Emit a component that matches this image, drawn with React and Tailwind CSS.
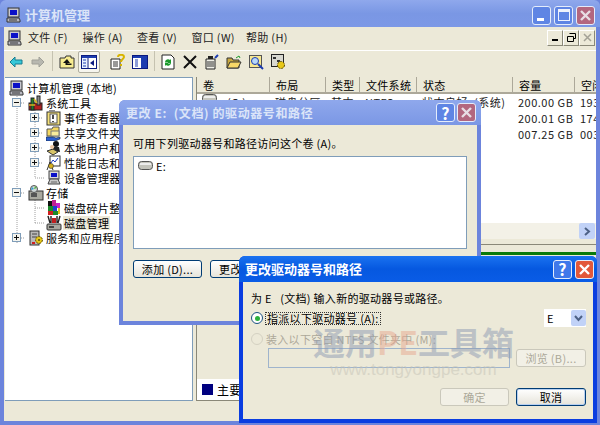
import React from "react";

const beige = "bg-[#ece9d8]";

const Computer = () => (
  <svg width="16" height="16" viewBox="0 0 16 16">
    <rect x="2" y="1" width="11" height="9" fill="#c8c8d0" stroke="#333" />
    <rect x="4" y="3" width="7" height="5" fill="#0a10c8" />
    <path d="M1 11h12l1 2v2H1z" fill="#b8b8c0" stroke="#333" />
    <path d="M3 13h8" stroke="#333" />
  </svg>
);

const Tools = () => (
  <svg width="16" height="16" viewBox="0 0 16 16">
    <rect x="1" y="8" width="13" height="7" fill="#b02020" stroke="#222" />
    <rect x="3" y="3" width="3" height="12" fill="#1d7a2d" stroke="#222" />
    <rect x="9" y="1" width="3" height="9" fill="#888" stroke="#222" />
    <path d="M6 4l3 4M1 10h6" stroke="#d8b020" strokeWidth="1.5" />
  </svg>
);

const EventIcon = () => (
  <svg width="16" height="16" viewBox="0 0 16 16">
    <rect x="1" y="2" width="13" height="13" fill="#f6e27a" stroke="#333" />
    <rect x="4" y="4" width="7" height="9" fill="#fff" stroke="#555" />
    <path d="M7 5v4M7 11v1" stroke="#111" strokeWidth="1.5" />
    <rect x="3" y="0" width="6" height="2" fill="#8a8a8a" />
  </svg>
);

const ShareIcon = () => (
  <svg width="16" height="16" viewBox="0 0 16 16">
    <path d="M1 4h5l1-2h6v9H1z" fill="#f4d860" stroke="#555" />
    <rect x="5" y="6" width="8" height="5" fill="#f8ec9c" stroke="#777" />
    <path d="M0 12h7l3 1 4-1v2l-5 2H0z" fill="#2c5fd0" stroke="#123" strokeWidth=".6" />
  </svg>
);

const UsersIcon = () => (
  <svg width="16" height="16" viewBox="0 0 16 16">
    <circle cx="10" cy="4" r="3" fill="#111" />
    <path d="M5 11l3-4h5l1 5z" fill="#222" />
    <path d="M1 11l6-2 5 3-5 3z" fill="#d8c468" stroke="#333" />
    <circle cx="6" cy="7" r="2" fill="#f0c8a0" />
  </svg>
);

const PerfIcon = () => (
  <svg width="16" height="16" viewBox="0 0 16 16">
    <rect x="4" y="1" width="10" height="10" fill="#fff" stroke="#333" />
    <path d="M5 8l2-3 2 2 3-4" stroke="#1c3cc0" fill="none" />
    <path d="M1 15l3-8 3 8M2 11h4" stroke="#333" fill="none" />
    <circle cx="5" cy="11" r="2.5" fill="#d8b020" stroke="#333" strokeWidth=".6" />
  </svg>
);

const DeviceIcon = () => (
  <svg width="16" height="16" viewBox="0 0 16 16">
    <rect x="3" y="1" width="10" height="8" fill="#d8d8d8" stroke="#444" />
    <rect x="5" y="3" width="6" height="4" fill="#0a10c8" />
    <path d="M2 14l2-5h8l2 5z" fill="#c8c8c8" stroke="#444" />
    <path d="M5 12h6" stroke="#666" />
  </svg>
);

const StorageIcon = () => (
  <svg width="16" height="16" viewBox="0 0 16 16">
    <rect x="1" y="6" width="14" height="9" fill="#a9a9a0" stroke="#333" />
    <rect x="3" y="8" width="6" height="4" fill="#555" />
    <circle cx="6" cy="4" r="3.5" fill="#d0d8d8" stroke="#555" />
    <path d="M4 2l2 2-3 1z" fill="#2c9cd0" />
    <path d="M7 1l2 2-3 1z" fill="#58b048" />
  </svg>
);

const DefragIcon = () => (
  <svg width="16" height="16" viewBox="0 0 16 16">
    <rect x="2" y="1" width="4" height="5" fill="#111" />
    <rect x="6" y="0" width="4" height="6" fill="#c02090" />
    <rect x="10" y="3" width="4" height="5" fill="#c820c8" />
    <rect x="2" y="6" width="5" height="5" fill="#1c8a2a" />
    <rect x="7" y="6" width="4" height="5" fill="#2040d0" />
    <rect x="2" y="11" width="5" height="4" fill="#d02020" />
    <rect x="7" y="11" width="5" height="4" fill="#1c8a2a" />
    <rect x="12" y="8" width="2" height="6" fill="#e0c020" />
  </svg>
);

const DiskIcon = () => (
  <svg width="16" height="16" viewBox="0 0 16 16">
    <rect x="1" y="9" width="14" height="6" rx="1" fill="#a8a8a0" stroke="#333" />
    <rect x="3" y="11" width="5" height="2" fill="#444" />
    <path d="M2 1l2 7M5 1v7M11 1v7M14 1l-2 7" stroke="#222" strokeWidth="1.4" />
    <path d="M6 3h4v5H6z" fill="#c02020" />
  </svg>
);

const ServiceIcon = () => (
  <svg width="16" height="16" viewBox="0 0 16 16">
    <rect x="2" y="1" width="9" height="14" fill="#b8b8b8" stroke="#333" />
    <path d="M4 4h5M4 7h5" stroke="#444" />
    <rect x="4" y="12" width="3" height="2" fill="#d02020" />
    <circle cx="11" cy="10" r="3.4" fill="#e8c818" stroke="#5a4a00" strokeDasharray="2 1" />
    <circle cx="11" cy="10" r="1" fill="#5a4a00" />
  </svg>
);

const ArrowLeft = () => (
  <svg width="14" height="12" viewBox="0 0 14 12">
    <path d="M1 6l5-5v3h7v4H6v3z" fill="#36c8d8" stroke="#167c90" />
  </svg>
);

const ArrowRight = () => (
  <svg width="14" height="12" viewBox="0 0 14 12">
    <path d="M13 6L8 1v3H1v4h7v3z" fill="#b8b8b0" stroke="#a0a098" />
  </svg>
);

const UpFolder = () => (
  <svg width="16" height="14" viewBox="0 0 16 14">
    <path d="M1 3h5l1-2h5v2h3v10H1z" fill="#f8ec90" stroke="#333" />
    <path d="M8 4l-4 4h2.500v2h6V8.500H8.500V8H11z" fill="#111" />
  </svg>
);

const PaneIcon = ({ flip }) => (
  <svg width="16" height="14" viewBox="0 0 16 14">
    <rect x=".5" y=".5" width="15" height="13" fill="#fff" stroke="#0a1a80" />
    <rect x="1" y="1" width="14" height="2" fill="#1c3cb0" />
    {flip ? (
      <>
        <rect x="9" y="3" width="6" height="10" fill="#1c3cb0" />
        <path d="M3 5h3M3 7h3M3 9h3M3 11h3" stroke="#1c3cb0" />
      </>
    ) : (
      <>
        <rect x="1" y="3" width="5" height="10" fill="#e8f0ff" />
        <path d="M7 3v10" stroke="#0a1a80" />
        <path d="M2 5h3M2 8h3M2 11h3" stroke="#1c3cb0" />
        <path d="M13 5v6l-4-3z" fill="#0a1a80" />
      </>
    )}
  </svg>
);

const HelpDoc = () => (
  <svg width="16" height="16" viewBox="0 0 16 16">
    <path d="M1 5h9v10H1z" fill="#fff" stroke="#222" />
    <path d="M3 8h5M3 10h5M3 12h5" stroke="#333" />
    <path d="M8 3c0-3 6-3 6 0 0 2-3 2-3 5M11 10v2" fill="none" stroke="#d8b400" strokeWidth="2" />
  </svg>
);

const Refresh = () => (
  <svg width="14" height="16" viewBox="0 0 14 16">
    <path d="M1 1h9l3 3v11H1z" fill="#fff" stroke="#222" />
    <path d="M4 8a3 3 0 015-2l1-1v4H6l1-1a2 2 0 00-2 1z" fill="#1c9a2c" />
    <path d="M10 9a3 3 0 01-5 2l-1 1V9h4l-1 1a2 2 0 002-1z" fill="#1c9a2c" />
  </svg>
);

const Cross = () => (
  <svg width="14" height="14" viewBox="0 0 14 14">
    <path d="M1 1l12 12M13 1L1 13" stroke="#111" strokeWidth="2" />
  </svg>
);

const Props = () => (
  <svg width="16" height="16" viewBox="0 0 16 16">
    <path d="M2 5h9v10H2z" fill="#f0f0e8" stroke="#222" />
    <path d="M3 8h7M3 10h7M3 12h7" stroke="#333" />
    <rect x="4" y="2" width="5" height="3" fill="#222" />
    <path d="M11 4l3-3" stroke="#1c3cb0" strokeWidth="2" />
  </svg>
);

const OpenFolder = () => (
  <svg width="16" height="14" viewBox="0 0 16 14">
    <path d="M1 3h5l1 2h6v8H1z" fill="#c8a840" stroke="#333" />
    <path d="M1 13l3-6h11l-3 6z" fill="#f8d868" stroke="#333" />
    <path d="M10 3l3-2 1 2" fill="none" stroke="#1c9a2c" />
  </svg>
);

const FindIcon = () => (
  <svg width="15" height="15" viewBox="0 0 15 15">
    <rect x=".5" y=".5" width="12" height="12" fill="#f8e890" stroke="#555" />
    <circle cx="6" cy="6" r="3.500" fill="#b8d8f8" stroke="#1c3cb0" />
    <path d="M9 9l5 5" stroke="#1c3cb0" strokeWidth="2" />
  </svg>
);

const GearDoc = () => (
  <svg width="15" height="16" viewBox="0 0 15 16">
    <rect x=".5" y=".5" width="12" height="12" fill="#d8d8d0" stroke="#222" />
    <path d="M2 3h3v2H2zM6 6h3v2H6z" fill="#333" />
    <circle cx="10" cy="11" r="3.500" fill="#e8c818" stroke="#5a4a00" strokeDasharray="2 1" />
  </svg>
);

const DriveIcon = () => (
  <svg width="15" height="9" viewBox="0 0 15 9">
    <rect x=".5" y=".5" width="14" height="8" rx="3" fill="#c4c4bc" stroke="#555" />
    <rect x="2" y="2" width="11" height="2" fill="#ededed" />
  </svg>
);

const Expander = ({ open }) => (
  <span className="flex h-[9px] w-[9px] items-center justify-center border border-[#7f9db9] bg-[#f4f4ee]">
    <svg width="7" height="7" viewBox="0 0 7 7">
      <path d={open ? "M1 3.500h5" : "M1 3.500h5M3.500 1v5"} stroke="#111" />
    </svg>
  </span>
);

const TreeRow = ({ level, expander, icon, label, selected }) => (
  <div className="relative flex h-[15px] items-center">
    <span className={level === 0 ? "w-[3px]" : level === 1 ? "w-[7px]" : "w-[25px]"} />
    {level > 0 && (
      <span className="flex w-[15px] shrink-0 items-center">
        {expander && <Expander open={expander === "open"} />}
      </span>
    )}
    <span className="flex w-[18px] shrink-0 items-center justify-center">{icon}</span>
    <span className={`whitespace-nowrap px-px leading-[14px] ${selected ? beige : ""}`}>{label}</span>
  </div>
);

const treeRows = [
  { level: 0, icon: <Computer />, label: "计算机管理 (本地)" },
  { level: 1, expander: "open", icon: <Tools />, label: "系统工具" },
  { level: 2, expander: "closed", icon: <EventIcon />, label: "事件查看器" },
  { level: 2, expander: "closed", icon: <ShareIcon />, label: "共享文件夹" },
  { level: 2, expander: "closed", icon: <UsersIcon />, label: "本地用户和组" },
  { level: 2, expander: "closed", icon: <PerfIcon />, label: "性能日志和警报" },
  { level: 2, icon: <DeviceIcon />, label: "设备管理器" },
  { level: 1, expander: "open", icon: <StorageIcon />, label: "存储" },
  { level: 2, icon: <DefragIcon />, label: "磁盘碎片整理" },
  { level: 2, icon: <DiskIcon />, label: "磁盘管理", selected: true },
  { level: 1, expander: "closed", icon: <ServiceIcon />, label: "服务和应用程序" },
];

const columns = ["卷", "布局", "类型", "文件系统", "状态", "容量", "空闲"];
const rows = [
  ["(C:)", "磁盘分区", "基本", "NTFS", "状态良好  (系统)", "200.00 GB", "193"],
  ["(D:)", "磁盘分区", "基本", "NTFS", "状态良好", "200.01 GB", "174"],
  ["(E:)", "磁盘分区", "基本", "NTFS", "状态良好", "007.25 GB", "003"],
];
const gridCols = "grid grid-cols-[73px_56px_34px_57px_96px_62px_22px]";

const menus = ["文件 (F)", "操作 (A)", "查看 (V)", "窗口 (W)", "帮助 (H)"];

const ToolBtn = ({ children, pressed }) => (
  <span
    className={`flex h-[22px] w-[22px] shrink-0 items-center justify-center rounded-[2px] ${
      pressed ? "border border-[#b0aea0] bg-[#f6f5ee]" : ""
    }`}
  >
    {children}
  </span>
);

const ToolSep = () => (
  <span className="flex w-[6px] shrink-0 justify-center">
    <span className="h-[20px] w-px bg-[#c5c2b0]" />
  </span>
);

const MdiBtn = ({ children, disabled }) => (
  <span className="flex h-[16px] w-[16px] items-center justify-center border border-[#fff] border-r-[#8a8878] border-b-[#8a8878] bg-[#ece9d8]">
    <svg width="11" height="11" viewBox="0 0 11 11" className={disabled ? "opacity-30" : ""}>
      {children}
    </svg>
  </span>
);

const CaptionBtn = ({ kind, active }) => {
  const color =
    kind === "close"
      ? active
        ? "bg-[#e2583a]"
        : "bg-[#b3677f]"
      : active
        ? "bg-[#3f78ea]"
        : "bg-[#5f85e4]";
  return (
    <span
      className={`flex h-[19px] w-[19px] items-center justify-center rounded-[3px] border border-[#e4ecfb] ${color}`}
    >
      {kind === "close" && (
        <svg width="13" height="13" viewBox="0 0 13 13">
          <path d="M2 2l9 9M11 2l-9 9" stroke={active ? "#fff" : "#e8dde4"} strokeWidth="2.400" />
        </svg>
      )}
      {kind === "help" && <span className="text-[16px] leading-none font-bold text-white">?</span>}
      {kind === "min" && <span className="mt-[8px] mr-[3px] h-[3px] w-[7px] bg-white" />}
      {kind === "max" && <span className="h-[12px] w-[12px] border border-t-[3px] border-[#eef2fc]" />}
    </span>
  );
};

const XpButton = ({ label, disabled, isDefault, className = "" }) => (
  <button
    className={`flex h-[18px] items-center justify-center rounded-[3px] border leading-none ${className} ${
      disabled
        ? "border-[#cac8bb] bg-[#f2f0e6] text-[#aca899]"
        : `border-[#003c74] bg-linear-to-b from-white to-[#e6e4da] text-black ${
            isDefault ? "shadow-[inset_0_0_0_1px_#b8d0f0]" : ""
          }`
    }`}
  >
    {label}
  </button>
);

const Radio = ({ checked, disabled }) => (
  <span
    className={`flex h-[12px] w-[12px] shrink-0 items-center justify-center rounded-full border ${
      disabled ? "border-[#d4d1c2] bg-[#ece9d8]" : "border-[#1c5180] bg-white"
    }`}
  >
    {checked && <span className="h-[5px] w-[5px] rounded-full bg-[#2bb03c]" />}
  </span>
);

const App = () => {
  return (
    <div className="relative h-[425px] w-[600px] overflow-hidden font-['Noto_Sans_CJK_SC','Liberation_Sans',sans-serif] text-[11px] tracking-[0.3px] text-black">
      {/* main window */}
      <div className="flex h-full w-full flex-col bg-[#6c84dc] px-[4px] pb-[4px]">
        <div className="-mx-[4px] flex h-[27px] shrink-0 items-center rounded-t-[6px] bg-linear-to-b from-[#8fa8ec] via-[#7a97e4] to-[#7c98e6] pt-[3px] pr-[5px] pl-[6px]">
          <Computer />
          <span className="ml-[3px] text-[13px] font-bold tracking-normal text-[#dbe4f8]">计算机管理</span>
          <span className="ml-auto flex gap-[3px]">
            <CaptionBtn kind="min" />
            <CaptionBtn kind="max" />
            <CaptionBtn kind="close" />
          </span>
        </div>
        <div className={`flex min-h-0 flex-1 flex-col ${beige}`}>
          <div className="flex h-[24px] shrink-0 items-center border-b border-white pb-[2px] pl-[3px]">
            <Computer />
            <div className="ml-[5px] flex">
              {menus.map((m) => (
                <span key={m} className="w-[54.500px] whitespace-nowrap text-[#222]">
                  {m}
                </span>
              ))}
            </div>
            <span className="mr-[1px] ml-auto flex">
              <MdiBtn>
                <path d="M2 8h6" stroke="#000" strokeWidth="2" />
              </MdiBtn>
              <MdiBtn>
                <path d="M3.500 1.500h6v5h-2M1.500 4.500h6v5h-6z" fill="none" stroke="#000" />
              </MdiBtn>
              <MdiBtn disabled>
                <path d="M2 2l7 7M9 2l-7 7" stroke="#000" strokeWidth="1.500" />
              </MdiBtn>
            </span>
          </div>
          <div className="flex h-[26px] shrink-0 items-start pl-[1px]">
            <ToolBtn><ArrowLeft /></ToolBtn>
            <ToolBtn><ArrowRight /></ToolBtn>
            <ToolSep />
            <span className="w-px" />
            <ToolBtn><UpFolder /></ToolBtn>
            <ToolBtn pressed><PaneIcon /></ToolBtn>
            <span className="w-[7px]" />
            <ToolBtn><HelpDoc /></ToolBtn>
            <ToolBtn><PaneIcon flip /></ToolBtn>
            <ToolSep />
            <ToolBtn><Refresh /></ToolBtn>
            <ToolBtn><Cross /></ToolBtn>
            <ToolBtn><Props /></ToolBtn>
            <ToolBtn><OpenFolder /></ToolBtn>
            <ToolBtn><FindIcon /></ToolBtn>
            <ToolBtn><GearDoc /></ToolBtn>
          </div>

          <div className="flex h-[324px] shrink-0 gap-[3px] pl-px">
            {/* tree */}
            <div className="relative h-full w-[188px] shrink-0 border border-l-0 border-[#7f9db9] bg-white pt-[2px]">
              <svg width="60" height="170" className="absolute top-0 left-0">
                <path
                  d="M12 16v150M12 25h8M30 30v70M30 40h8M30 55h8M30 70h8M30 85h8M30 100h10M12 115h8M30 120v25M30 130h10M30 145h10M12 160h8"
                  stroke="#a0a0a0"
                  strokeDasharray="1 1"
                  fill="none"
                />
              </svg>
              {treeRows.map((r) => (
                <TreeRow key={r.label} {...r} />
              ))}
            </div>

            {/* volumes and disks */}
            <div className="flex h-full min-w-0 flex-1 flex-col border-l border-[#8a8878]">
              <div className="flex h-[162px] shrink-0 flex-col overflow-hidden bg-white">
                <div className={`${gridCols} h-[17px] shrink-0 ${beige}`}>
                  {columns.map((c) => (
                    <span
                      key={c}
                      className="overflow-hidden border-r border-b-2 border-[#aca899] pl-[6px] leading-[16px] whitespace-nowrap"
                    >
                      {c}
                    </span>
                  ))}
                </div>
                <div className="flex-1">
                  {rows.map((row) => (
                    <div key={row[5]} className={`${gridCols} h-[16px] items-center`}>
                      {row.map((cell, i) => (
                        <span
                          key={i}
                          className="flex overflow-hidden pl-[5px] leading-[16px] tracking-[0.5px] whitespace-pre text-[#222]"
                        >
                          {i === 0 && (
                            <span className="mr-[10px]">
                              <DriveIcon />
                            </span>
                          )}
                          {cell}
                        </span>
                      ))}
                    </div>
                  ))}
                </div>
                <div className="flex h-[16px] shrink-0 justify-end bg-[#f3f1e7]">
                  <span className="mr-[1px] flex h-[16px] w-[16px] items-center justify-center rounded-[2px] bg-[#c1d2f7]">
                    <svg width="8" height="9" viewBox="0 0 8 9">
                      <path d="M2 1l4 3.500L2 8" fill="none" stroke="#4d6185" strokeWidth="2" />
                    </svg>
                  </span>
                </div>
              </div>
              <div className="h-[5px] shrink-0" />
              <div className="flex min-h-0 flex-1 flex-col justify-between border-t border-b border-[#8a8878] pt-[7px]">
                <div className="h-[3px] bg-[#0a7a0a]" />
                <div className="flex h-[21px] items-center gap-[4px] bg-white pl-[5px]">
                  <span className="h-[11px] w-[11px] bg-[#00007f]" />
                  <span className="text-[12px]">主要磁盘分区</span>
                </div>
              </div>
            </div>
          </div>
          <div className="min-h-0 flex-1" />
        </div>
      </div>

      {/* inactive dialog */}
      <div className="absolute top-[100px] left-[119px] flex h-[225px] w-[362px] flex-col rounded-t-[6px] bg-[#6c84dc] px-[4px] pb-[4px]">
        <div className="-mx-[4px] flex h-[25px] shrink-0 items-center rounded-t-[6px] bg-linear-to-b from-[#8fa8ec] to-[#7b97e5] pr-[5px] pl-[7px]">
          <span className="text-[12px] font-bold tracking-[0.6px] whitespace-pre text-[#dbe4f8]">更改 E:  (文档) 的驱动器号和路径</span>
          <span className="ml-auto flex gap-[2px]">
            <CaptionBtn kind="help" />
            <CaptionBtn kind="close" />
          </span>
        </div>
        <div className={`flex min-h-0 flex-1 flex-col px-[10px] pt-[11px] ${beige}`}>
          <span className="leading-[14px]">可用下列驱动器号和路径访问这个卷 (A)。</span>
          <div className="mt-[6px] flex h-[93px] shrink-0 items-start gap-[3px] border border-[#7f9db9] bg-white px-[4px] pt-[4px]">
            <DriveIcon />
            <span className="leading-[10px]">E:</span>
          </div>
          <div className="mt-[11px] flex gap-[8px]">
            <XpButton label="添加 (D)..." className="w-[69px]" />
            <XpButton label="更改 (C)..." className="w-[69px]" />
          </div>
        </div>
      </div>

      {/* active dialog */}
      <div className="absolute top-[256px] left-[239px] flex h-[167px] w-[358px] flex-col rounded-t-[6px] bg-[#0a3de0] px-[4px] pb-[4px]">
        <div className="-mx-[4px] flex h-[26px] shrink-0 items-center rounded-t-[6px] bg-linear-to-b from-[#1a72f0] via-[#0658e0] to-[#0a5ce6] pr-[3px] pl-[6px]">
          <span className="text-[13px] font-bold tracking-normal text-white">更改驱动器号和路径</span>
          <span className="ml-auto flex gap-[3px]">
            <CaptionBtn kind="help" active />
            <CaptionBtn kind="close" active />
          </span>
        </div>
        <div className={`flex min-h-0 flex-1 flex-col px-[8px] pt-[9px] ${beige}`}>
          <span className="leading-[14px] whitespace-pre">为 E   (文档) 输入新的驱动器号或路径。</span>
          <div className="mt-[4px] flex h-[18px] items-center">
            <Radio checked />
            <span className="ml-[2px] border border-dotted border-[#333] px-px leading-[11px] whitespace-pre">指派以下驱动器号 (A):</span>
            <span className="ml-auto mr-[-1px] flex h-[18px] w-[42px] items-center bg-white pl-[3px]">
              <span className="flex-1">E</span>
              <span className="flex h-[16px] w-[15px] items-center justify-center rounded-[2px] bg-[#c1d2f7]">
                <svg width="9" height="7" viewBox="0 0 9 7">
                  <path d="M1 1l3.500 4L8 1" fill="none" stroke="#4d6185" strokeWidth="2" />
                </svg>
              </span>
            </span>
          </div>
          <div className="mt-[3px] flex h-[17px] items-center text-[#aca899]">
            <Radio disabled />
            <span className="ml-[3px] leading-[14px] whitespace-pre">装入以下空白 NTFS 文件夹中 (M):</span>
          </div>
          <div className="mt-[1px] flex items-center justify-between pl-[17px]">
            <span className="h-[20px] w-[242px] border border-[#9fb4cc]" />
            <XpButton label="浏览 (B)..." disabled className="mr-[-1px] w-[70px]" />
          </div>
          <div className="mt-[20px] mr-[-1px] flex justify-end gap-[7px]">
            <XpButton label="确定" disabled className="w-[69px]" />
            <XpButton label="取消" isDefault className="w-[70px]" />
          </div>
        </div>
      </div>

      {/* watermark */}
      <div className="pointer-events-none absolute top-[322px] left-[313px] flex flex-col items-center tracking-normal opacity-50">
        <span className="text-[32px] leading-[38px] font-bold whitespace-nowrap text-[#8d9bb4]">
          通用<span className="text-[#e8a890]">PE</span>工具箱
        </span>
        <span className="font-['Liberation_Sans',sans-serif] text-[17px] leading-[20px] text-[#c4c2b6]">www.tongyongpe.com</span>
      </div>
    </div>
  );
};

export default App;
